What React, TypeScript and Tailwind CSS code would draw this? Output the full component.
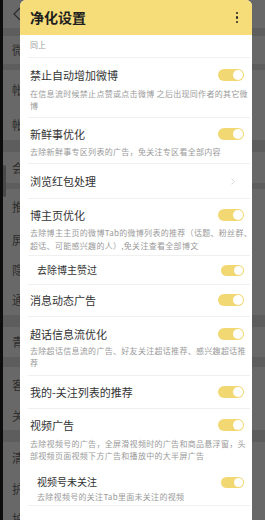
import type { ReactNode } from 'react'

const FONT = { fontFamily: '"Noto Sans CJK SC", "Noto Sans", sans-serif' }

type BgRow = { c?: string; h: string; band?: boolean; chev?: boolean; hdr?: boolean }

const BG_ROWS: BgRow[] = [
  { hdr: true, h: 'h-[28px]' },
  { band: true, h: 'h-[8px]' },
  { c: '微', h: 'h-[28px]' },
  { band: true, h: 'h-[6px]' },
  { c: '帐', h: 'h-[40px]', chev: true },
  { c: '帐', h: 'h-[30px]', chev: true },
  { band: true, h: 'h-[12px]' },
  { c: '会', h: 'h-[31px]', chev: true },
  { band: true, h: 'h-[6px]' },
  { c: '推', h: 'h-[36px]', chev: true },
  { c: '屏', h: 'h-[30px]', chev: true },
  { c: '隐', h: 'h-[30px]', chev: true },
  { c: '通', h: 'h-[30px]', chev: true },
  { band: true, h: 'h-[12px]' },
  { c: '青', h: 'h-[30px]', chev: true },
  { band: true, h: 'h-[10px]' },
  { c: '客', h: 'h-[35px]', chev: true },
  { c: '关', h: 'h-[28px]', chev: true },
  { band: true, h: 'h-[12px]' },
  { c: '清', h: 'h-[32px]', chev: true },
  { c: '护', h: 'h-[30px]' },
  { c: '护', h: 'h-[30px]' },
]

function Chevron({ className }: { className?: string }) {
  return (
    <svg width="6" height="10" viewBox="0 0 6 10" className={className}>
      <polyline points="1,1 5,5 1,9" fill="none" stroke="currentColor" strokeWidth="1" />
    </svg>
  )
}

function Toggle({ small }: { small?: boolean }) {
  return (
    <div
      className={
        small
          ? 'flex h-[11px] w-[23px] items-center justify-end rounded-full bg-[#f2d873] p-[1px]'
          : 'flex h-[12px] w-[26px] items-center justify-end rounded-full bg-[#f2d873] p-[1px]'
      }
    >
      <div className="h-full aspect-square rounded-full bg-white" />
    </div>
  )
}

function Row({
  title,
  desc,
  right,
  pad,
  descGap,
  descLead = 'leading-[12px]',
  indent,
  divider = true,
}: {
  title: string
  desc?: ReactNode
  right?: ReactNode
  pad: string
  descGap?: string
  descLead?: string
  indent?: boolean
  divider?: boolean
}) {
  return (
    <div className={`ml-[8px] mr-[2px] ${divider ? 'border-b border-[#f0f0f0]' : ''}`}>
      <div className={`${indent ? 'pl-[9px]' : 'pl-[2px]'} ${pad}`}>
        <div className="flex h-[16px] items-center justify-between pr-[6px]">
          <span className={indent ? 'text-[10px] leading-[16px] text-[#333]' : 'text-[11px] leading-[16px] text-[#333]'}>
            {title}
          </span>
          {right}
        </div>
        {desc && (
          <p className={`${descGap} whitespace-nowrap text-[8px] tracking-[0.3px] ${descLead} text-[#9a9a9a]`}>{desc}</p>
        )}
      </div>
    </div>
  )
}

export default function App() {
  return (
    <div className="relative h-[520px] w-[265px] overflow-hidden bg-[#686868]" style={FONT}>
      {/* dimmed settings page behind the dialog */}
      <div className="flex h-full">
        <div className="relative w-[3px] shrink-0 bg-[#0d0d0d]">
          <div className="absolute left-[3px] top-[165px] h-[32px] w-[3px] rounded-full bg-[#4a4a4a]" />
        </div>
        <div className="flex flex-1 flex-col">
          {BG_ROWS.map((r, i) =>
            r.band ? (
              <div key={i} className={`${r.h} shrink-0 bg-[#5d5d5d]`} />
            ) : r.hdr ? (
              <div key={i} className={`${r.h} flex shrink-0 items-center pl-[10px] text-[#2c2c2c]`}>
                <svg width="8" height="14" viewBox="0 0 8 14">
                  <polyline points="7,1 1,7 7,13" fill="none" stroke="currentColor" strokeWidth="1.2" />
                </svg>
              </div>
            ) : (
              <div key={i} className={`${r.h} flex shrink-0 items-center justify-between pl-[9px] pr-[18px]`}>
                <span className="text-[12px] text-[#2e2e2e]">{r.c}</span>
                {r.chev && <Chevron className="text-[#505050]" />}
              </div>
            ),
          )}
        </div>
      </div>

      {/* dialog */}
      <div className="absolute left-[20px] top-0 h-[540px] w-[232px] overflow-hidden rounded-t-[6px] bg-white">
        <div className="flex h-[35px] items-center justify-between bg-[#f6dd7a] pl-[10px] pr-[14px]">
          <span className="text-[14px] font-bold text-[#1e1e1e]">净化设置</span>
          <div className="flex flex-col gap-[2px]">
            <span className="h-[2.5px] w-[2.5px] rounded-full bg-[#222]" />
            <span className="h-[2.5px] w-[2.5px] rounded-full bg-[#222]" />
            <span className="h-[2.5px] w-[2.5px] rounded-full bg-[#222]" />
          </div>
        </div>

        <p className="ml-[8px] mr-[2px] border-b border-[#f0f0f0] pl-[2px] pt-[4px] pb-[6px] text-[8px] leading-[12px] text-[#9a9a9a]">
          同上
        </p>

        <Row
          title="禁止自动增加微博"
          right={<Toggle />}
          pad="pt-[9px] pb-[5px]"
          descGap="mt-[5px]"
          desc={<>在信息流时候禁止点赞或点击微博 之后出现同作者的其它微<br />博</>}
        />
        <Row
          title="新鲜事优化"
          right={<Toggle />}
          pad="pt-[8px] pb-[5px]"
          descGap="mt-[4px]"
          desc="去除新鲜事专区列表的广告，免关注专区看全部内容"
        />
        <Row
          title="浏览红包处理"
          right={<Chevron className="mr-[8px] h-[7px] text-[#c4c4c4]" />}
          pad="pt-[9px] pb-[9px]"
        />
        <Row
          title="博主页优化"
          right={<Toggle />}
          pad="pt-[8px] pb-[3px]"
          descGap="mt-[3px]"
          descLead="leading-[13px]"
          desc={<>去除博主主页的微博Tab的微博列表的推荐（话题、粉丝群、<br />超话、可能感兴趣的人）,免关注查看全部博文</>}
        />
        <Row title="去除博主赞过" indent right={<Toggle small />} pad="pt-[6px] pb-[6px]" />
        <Row title="消息动态广告" right={<Toggle />} pad="pt-[7px] pb-[8px]" />
        <Row
          title="超话信息流优化"
          right={<Toggle />}
          pad="pt-[9px] pb-[6px]"
          descGap="mt-[3px]"
          desc={<>去除超话信息流的广告、好友关注超话推荐、感兴趣超话推<br />荐</>}
        />
        <Row title="我的-关注列表的推荐" right={<Toggle />} pad="pt-[8px] pb-[8px]" />
        <Row
          title="视频广告"
          right={<Toggle />}
          pad="pt-[8px] pb-[9px]"
          descGap="mt-[5px]"
          desc={<>去除视频号的广告，全屏滑视频时的广告和商品悬浮窗，头<br />部视频页面视频下方广告和播放中的大半屏广告</>}
          divider={false}
        />
        <Row
          title="视频号未关注"
          indent
          right={<Toggle small />}
          pad="pt-[3px] pb-[2px]"
          descGap="mt-[1px]"
          desc="去除视频号的关注Tab里面未关注的视频"
        />
      </div>
    </div>
  )
}
